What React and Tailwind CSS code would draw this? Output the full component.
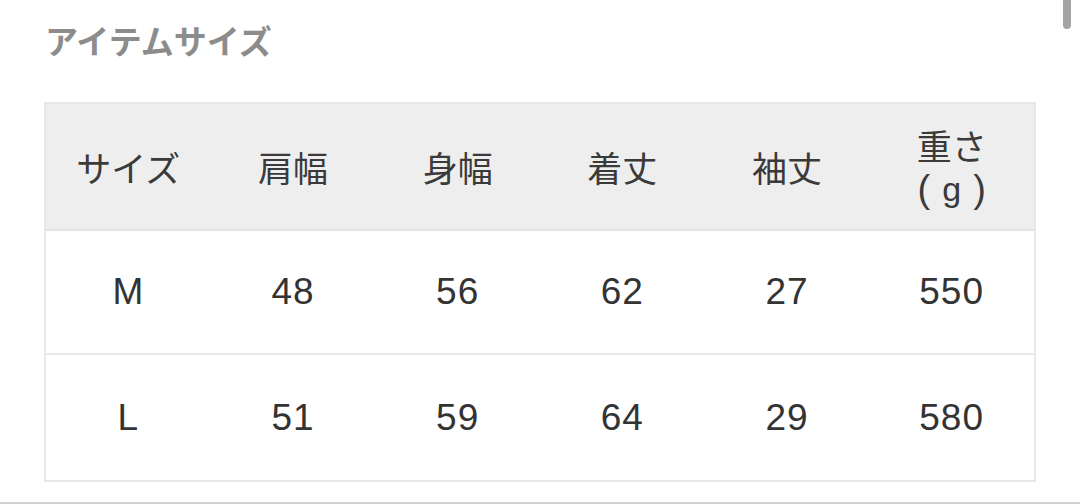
export default function App() {
  const font = { fontFamily: '"Noto Sans CJK JP", "Noto Sans", sans-serif' };
  const num = { fontFamily: '"Liberation Sans", "Noto Sans", sans-serif' };
  const headers = ["サイズ", "肩幅", "身幅", "着丈", "袖丈"];
  const rows = [
    ["M", "48", "56", "62", "27", "550"],
    ["L", "51", "59", "64", "29", "580"],
  ];
  return (
    <div className="relative w-[1080px] h-[504px] bg-white overflow-hidden" style={font}>
      <div className="absolute right-[9px] top-0 w-[8px] h-[29px] rounded-b-full bg-[#a3a3a3]" />
      <div className="pl-[45px] pt-[18px]">
        <h2 className="text-[33px] leading-[44px] font-bold text-[#8c8c8c]">アイテムサイズ</h2>
      </div>
      <div className="ml-[44px] mt-[40px] w-[992px] border-2 border-[#e8e8e8]">
        <div className="grid grid-cols-6 h-[127px] bg-[#eeeeee] border-b-2 border-[#e4e4e4] text-[35px] text-[#3a3a3a]">
          {headers.map((h, i) => (
            <div key={i} className="flex items-center justify-center leading-[44px]">
              {h}
            </div>
          ))}
          <div className="flex flex-col items-center justify-center">
            <span className="leading-[44px]">重さ</span>
            <span className="flex items-center gap-[12px] h-[44px] leading-[40px] font-light">
              <span className="text-[38px]" style={num}>(</span>
              <span style={num} className="text-[34px]">g</span>
              <span className="text-[38px]" style={num}>)</span>
            </span>
          </div>
        </div>
        {rows.map((r, i) => (
          <div
            key={i}
            className={`grid grid-cols-6 ${i === 0 ? "h-[124px] border-b-2 border-[#e8e8e8]" : "h-[125px]"}`}
          >
            {r.map((c, j) => (
              <div
                key={j}
                className="flex items-center justify-center text-[37px] tracking-[1px] text-[#333333]"
                style={num}
              >
                {c}
              </div>
            ))}
          </div>
        ))}
      </div>
      <div className="absolute left-0 right-0 bottom-0 h-[2px] bg-[#cfcfcf]" />
    </div>
  );
}
